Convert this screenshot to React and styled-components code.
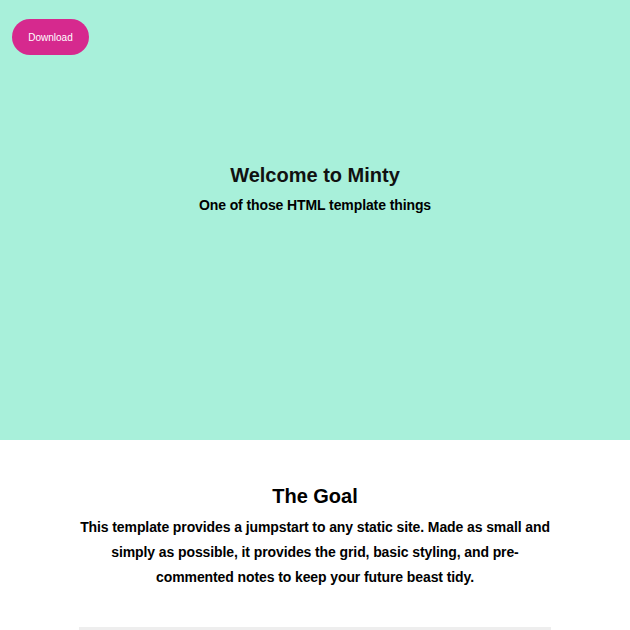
import React from "react";
import styled, { createGlobalStyle } from "styled-components";

const GlobalStyle = createGlobalStyle`
body {
    margin: 0;
    font-family: "Liberation Sans", Arial, sans-serif;
    background: #fff;
    color: #000;
}
`;

const Hero = styled.header`
height: 440px;
background: #a8f0da;
display: flex;
flex-direction: column;
padding: 19px 12px 0;
box-sizing: border-box;
`;

const DownloadButton = styled.button`
align-self: flex-start;
width: 77px;
height: 36px;
border-radius: 18px;
border: none;
background: #d6298e;
color: #fff;
font-family: inherit;
font-size: 10px;
cursor: pointer;
`;

const HeroText = styled.div`
margin-top: 108px;
text-align: center;
`;

const Title = styled.h1`
margin: 0;
font-size: 20px;
line-height: 24px;
color: #111;
`;

const Subtitle = styled.p`
margin: 9px 0 0;
font-size: 14px;
font-weight: bold;
line-height: 18px;
letter-spacing: -0.1px;
`;

const Section = styled.section`
width: 75%;
margin: 0 auto;
padding-top: 44px;
text-align: center;
`;

const SectionTitle = styled.h2`
margin: 0;
font-size: 20px;
line-height: 24px;
`;

const Text = styled.p`
margin: 7px 0 0;
font-size: 14px;
font-weight: bold;
line-height: 25px;
letter-spacing: -0.1px;
`;

const Divider = styled.div`
margin-top: 37px;
height: 10px;
background: #eeeeee;
`;

const App = () => {
    return (
        <>
            <GlobalStyle />
            <Hero>
                <DownloadButton>Download</DownloadButton>
                <HeroText>
                    <Title>Welcome to Minty</Title>
                    <Subtitle>One of those HTML template things</Subtitle>
                </HeroText>
            </Hero>
            <Section>
                <SectionTitle>The Goal</SectionTitle>
                <Text>
                    This template provides a jumpstart to any static site. Made as small and simply as possible, it provides the grid, basic styling, and pre-commented notes to keep your future beast tidy.
                </Text>
                <Divider />
            </Section>
        </>
    );
};

export default App;
